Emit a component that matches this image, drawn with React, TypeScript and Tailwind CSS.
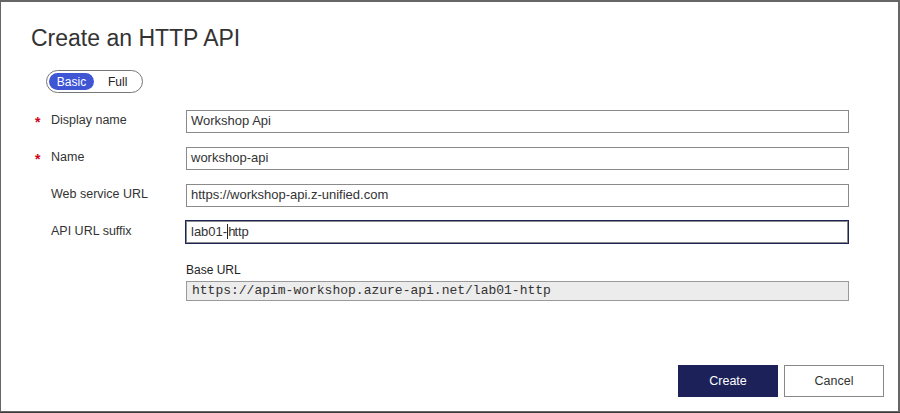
const font = { fontFamily: '"Liberation Sans", Arial, sans-serif' };

type FieldProps = {
  label: string;
  value: string;
  required?: boolean;
  focused?: boolean;
};

function Field({ label, value, required, focused }: FieldProps) {
  return (
    <div className="flex items-center h-[22px]">
      <div className="w-[20px] pl-[4px] text-[#d0021b] text-[14px] font-bold leading-none self-start pt-[5px]">
        {required ? "*" : ""}
      </div>
      <div className="w-[135px] text-[12.5px] text-[#333] self-start pt-[1px]">{label}</div>
      <div
        className={
          focused
            ? "w-[664px] h-[24px] border border-[#1b2358] shadow-[inset_0_0_0_1px_#8a8a8a] flex items-center px-[5px] text-[13px] text-[#333] -ml-px"
            : "w-[663px] h-[23px] border-[1.5px] border-[#8a8a8a] flex items-center px-[4px] text-[13px] text-[#333]"
        }
      >
        {focused ? (
          <span>
            lab01-<span className="border-l border-[#222] -mr-px">h</span>ttp
          </span>
        ) : (
          value
        )}
      </div>
    </div>
  );
}

export default function App() {
  return (
    <div className="w-[900px] h-[413px] bg-[#3a3a3a] flex flex-col" style={font}>
      <div className="w-[900px] h-[412px] bg-white border-[#666] border-l border-r-2 border-t-2 border-b flex flex-col">
        <h1 className="mt-[22px] ml-[30px] text-[23px] text-[#333] leading-[28px]">Create an HTTP API</h1>

        <div className="ml-[45px] mt-[18px] w-[97px] h-[23px] rounded-full border border-[#777] flex items-center px-[2px]">
          <div className="w-[45px] h-[17px] rounded-full bg-[#3e55d4] text-white text-[12px] flex items-center justify-center">
            Basic
          </div>
          <div className="ml-[14px] text-[12px] text-[#222]">Full</div>
        </div>

        <div className="ml-[30px] mt-[17px] flex flex-col gap-[15px]">
          <Field label="Display name" value="Workshop Api" required />
          <Field label="Name" value="workshop-api" required />
          <Field label="Web service URL" value="https://workshop-api.z-unified.com" />
          <Field label="API URL suffix" value="lab01-http" focused />
        </div>

        <div className="ml-[185px] mt-[19px] flex flex-col">
          <div className="text-[12px] text-[#222] leading-[16px]">Base URL</div>
          <div
            className="mt-[3px] w-[663px] h-[20px] bg-[#ececec] border border-[#9a9a9a] flex items-center px-[5px] text-[13px] text-[#333]"
            style={{ fontFamily: '"Liberation Mono", "Courier New", monospace' }}
          >
            https://apim-workshop.azure-api.net/lab01-http
          </div>
        </div>

        <div className="mt-auto mb-[14px] mr-[14px] flex justify-end gap-[6px]">
          <button className="w-[100px] h-[32px] bg-[#1c2259] text-white text-[12.5px]">Create</button>
          <button className="w-[100px] h-[32px] bg-white border border-[#888] text-[#333] text-[12.5px]">
            Cancel
          </button>
        </div>
      </div>
    </div>
  );
}
